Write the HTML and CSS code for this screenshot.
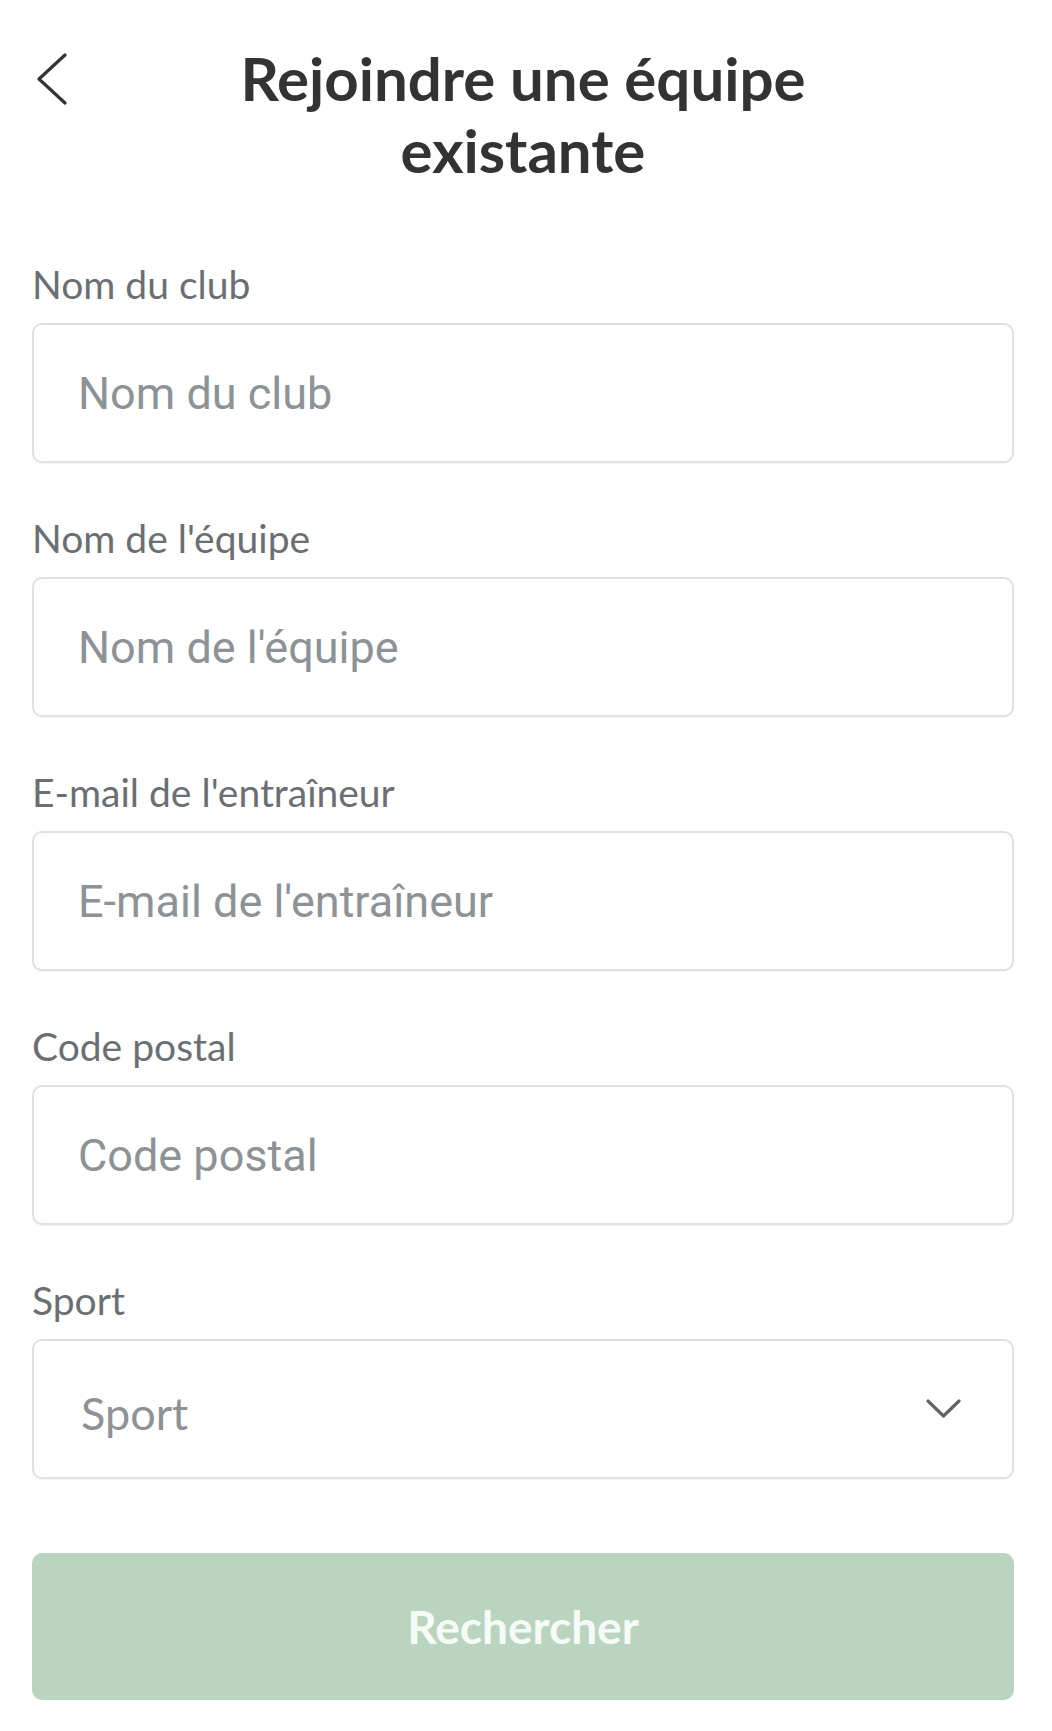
FILE: index.html
```html
<!DOCTYPE html>
<html lang="fr">
<head>
<meta charset="utf-8">
<title>Rejoindre une équipe existante</title>
<link rel="stylesheet" href="styles.css">
</head>
<body>
<div class="page">
  <header class="header">
    <button class="back" type="button" aria-label="Retour">
      <svg width="30" height="52" viewBox="0 0 30 52"><polyline points="28,2 2,26 28,50" fill="none" stroke="#333" stroke-width="3.2" stroke-linecap="round" stroke-linejoin="round"/></svg>
    </button>
    <h1 class="title">Rejoindre une équipe<br>existante</h1>
    <div></div>
  </header>
  <form class="form">
    <div class="field">
      <label class="label">Nom du club</label>
      <input class="input" type="text" placeholder="Nom du club">
    </div>
    <div class="field">
      <label class="label">Nom de l'équipe</label>
      <input class="input" type="text" placeholder="Nom de l'équipe">
    </div>
    <div class="field">
      <label class="label">E-mail de l'entraîneur</label>
      <input class="input" type="text" placeholder="E-mail de l'entraîneur">
    </div>
    <div class="field">
      <label class="label">Code postal</label>
      <input class="input" type="text" placeholder="Code postal">
    </div>
    <div class="field">
      <label class="label">Sport</label>
      <div class="select">
        <span class="select-text">Sport</span>
        <svg width="35" height="19" viewBox="0 0 35 19"><polyline points="2,2 17.5,17 33,2" fill="none" stroke="#5f6468" stroke-width="3.2" stroke-linecap="round" stroke-linejoin="round"/></svg>
      </div>
    </div>
    <button class="submit" type="button">Rechercher</button>
  </form>
</div>
</body>
</html>
```
FILE: styles.css
```css
html, body {
  margin: 0;
  padding: 0;
  background: #ffffff;
}

.page {
  font-family: Lato, "Noto Sans", sans-serif;
  padding: 42px 38px 0 32px;
  box-sizing: border-box;
  width: 1052px;
  min-height: 1731px;
}

.header {
  display: grid;
  grid-template-columns: 1fr auto 1fr;
  align-items: start;
}

.back {
  background: none;
  border: none;
  padding: 0;
  margin: 11px 0 0 5px;
  width: 30px;
  height: 52px;
  justify-self: start;
  display: block;
}

.back svg {
  display: block;
}

.title {
  margin: 0;
  font-family: Lato, sans-serif;
  font-weight: 700;
  font-size: 60px;
  line-height: 72px;
  color: #333333;
  text-align: center;
}

.form {
  margin-top: 76px;
  display: flex;
  flex-direction: column;
  gap: 53px;
}

.field {
  display: flex;
  flex-direction: column;
}

.label {
  font-family: Lato, sans-serif;
  font-size: 39px;
  line-height: 44px;
  color: #6a6f73;
  margin-bottom: 17px;
}

.input {
  box-sizing: border-box;
  height: 140px;
  width: 100%;
  border: 2px solid #e1e1e1;
  border-radius: 10px;
  background: #ffffff;
  padding: 0 30px 0 44px;
  font-family: Roboto, "Liberation Sans", sans-serif;
  font-size: 45px;
  color: #333;
  outline: none;
  box-shadow: 0 1px 0 rgba(0,0,0,0.04);
}

.input::placeholder {
  color: #8d9296;
  opacity: 1;
}

.select {
  box-sizing: border-box;
  height: 140px;
  border: 2px solid #e1e1e1;
  border-radius: 10px;
  background: #ffffff;
  padding: 8px 51px 0 47px;
  display: flex;
  align-items: center;
  justify-content: space-between;
  box-shadow: 0 1px 0 rgba(0,0,0,0.04);
}

.select-text {
  font-family: Lato, sans-serif;
  font-size: 45px;
  color: #8d9296;
}

.select svg {
  display: block;
  margin-top: -9px;
}

.submit {
  margin-top: 21px;
  height: 147px;
  border: none;
  border-radius: 10px;
  background: #b9d5bf;
  color: #f7fbf7;
  font-family: Lato, sans-serif;
  font-weight: 700;
  font-size: 46px;
  padding: 0;
  width: 100%;
}
```
